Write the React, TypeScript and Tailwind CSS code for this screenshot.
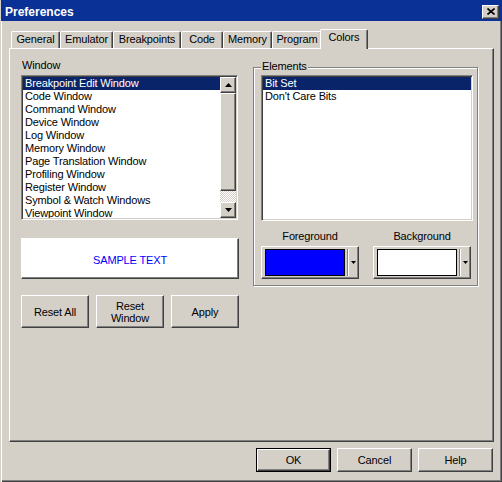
import React from 'react';

// classic 3D borders
const raised =
    'border border-t-white border-l-white border-r-[#404040] border-b-[#404040] shadow-[inset_-1px_-1px_#808080]';
const sunken =
    'border border-t-[#808080] border-l-[#808080] border-r-white border-b-white shadow-[inset_1px_1px_#404040,inset_-1px_-1px_#d4d0c8]';

const windows = [
    'Breakpoint Edit Window',
    'Code Window',
    'Command Window',
    'Device Window',
    'Log Window',
    'Memory Window',
    'Page Translation Window',
    'Profiling Window',
    'Register Window',
    'Symbol & Watch Windows',
    'Viewpoint Window',
];

const tabs = [
    { label: 'General', w: 'w-[49px]' },
    { label: 'Emulator', w: 'w-[53px]' },
    { label: 'Breakpoints', w: 'w-[68px]' },
    { label: 'Code', w: 'w-[42px]' },
    { label: 'Memory', w: 'w-[49px]' },
    { label: 'Program', w: 'w-[50px]' },
];

function Arrow(props: { up?: boolean }): JSX.Element {
    return (
        <svg width="7" height="4" viewBox="0 0 7 4">
            {props.up ? (
                <polygon points="3.5,0 7,4 0,4" fill="#000" />
            ) : (
                <polygon points="0,0 7,0 3.5,4" fill="#000" />
            )}
        </svg>
    );
}

function Button(props: { children: React.ReactNode; className?: string }): JSX.Element {
    return (
        <div
            className={`${raised} bg-[#d4d0c8] flex items-center justify-center text-center leading-[12px] ${props.className ?? ''}`}
        >
            {props.children}
        </div>
    );
}

function ColorPicker(props: { color: string }): JSX.Element {
    return (
        <div className={`${raised} w-[98px] h-[33px] flex items-stretch`}>
            <div
                className={`ml-[3px] mt-[2px] mb-[2px] w-[80px] border border-black ${props.color}`}
            />
            <div className="ml-[2px] my-[2px] w-[2px] border-l border-l-[#808080] border-r border-r-white" />
            <div className="flex-1 flex items-center justify-center pr-[1px]">
                <svg width="5" height="3" viewBox="0 0 5 3">
                    <polygon points="0,0 5,0 2.5,3" fill="#000" />
                </svg>
            </div>
        </div>
    );
}

function WindowList(): JSX.Element {
    return (
        <div className={`${sunken} bg-white w-[217px] h-[145px] flex p-px`}>
            <div className="flex-1 overflow-hidden">
                {windows.map((w, i) => (
                    <div
                        key={w}
                        className={
                            'h-[13px] leading-[13px] pl-[2px] whitespace-nowrap ' +
                            (i === 0 ? 'bg-[#0a246a] text-white' : 'text-black')
                        }
                    >
                        {w}
                    </div>
                ))}
            </div>
            <div className="w-[16px] flex flex-col">
                <div className={`${raised} bg-[#d4d0c8] h-[16px] flex items-center justify-center`}>
                    <Arrow up />
                </div>
                <div className={`${raised} bg-[#d4d0c8] h-[98px]`} />
                <div className="h-[11px] bg-[repeating-conic-gradient(#ffffff_0_25%,#d4d0c8_0_50%)] bg-[length:2px_2px]" />
                <div className={`${raised} bg-[#d4d0c8] h-[16px] flex items-center justify-center`}>
                    <Arrow />
                </div>
            </div>
        </div>
    );
}

export default function App(): JSX.Element {
    return (
        <div
            className="w-[502px] h-[482px] bg-[#d4d0c8] flex flex-col text-[11px] tracking-[-0.15px] text-black shadow-[inset_1px_0_#d4d0c8,inset_2px_0_#ffffff,inset_-1px_-1px_#404040,inset_-2px_-2px_#808080] select-none"
            style={{ fontFamily: '"Liberation Sans", Arial, sans-serif' }}
        >
            {/* title bar */}
            <div className="ml-px h-[21px] pt-[2px] bg-[#0a3196] flex items-center justify-between pl-[4px] pr-[3px]">
                <div className="text-white font-bold text-[12px] leading-[14px] tracking-normal">Preferences</div>
                <div className={`${raised} bg-[#d4d0c8] w-[17px] h-[14px] flex items-center justify-center`}>
                    <svg width="8" height="7" viewBox="0 0 8 7">
                        <path d="M0.5 0.5 L7.5 6.5 M7.5 0.5 L0.5 6.5" stroke="#000" strokeWidth="1.6" />
                    </svg>
                </div>
            </div>

            {/* tabs */}
            <div className="mt-[8px] ml-[11px] h-[20px] -mb-px relative z-10 flex items-end">
                {tabs.map((t) => (
                    <div
                        key={t.label}
                        className={`${t.w} h-[17px] mb-px pt-[1px] text-center leading-[13px] border-t border-l border-r border-t-white border-l-white border-r-[#404040] shadow-[inset_-1px_0_#808080] rounded-t-[2px]`}
                    >
                        {t.label}
                    </div>
                ))}
                <div className="-ml-[2px] w-[48px] h-[20px] pt-[1px] text-center leading-[13px] bg-[#d4d0c8] border-t border-l border-r border-t-white border-l-white border-r-[#404040] shadow-[inset_-1px_0_#808080] rounded-t-[2px]">
                    Colors
                </div>
            </div>

            {/* tab panel */}
            <div className={`${raised} ml-[9px] w-[485px] h-[394px] flex pl-[11px]`}>
                <div className="w-[218px] flex flex-col">
                    <div className="mt-[10px] h-[13px] leading-[13px] pl-[1px]">Window</div>
                    <div className="mt-[3px]">
                        <WindowList />
                    </div>
                    <div className={`${raised} mt-[18px] bg-white h-[41px] pt-[3px] flex items-center justify-center text-[#0000ff]`}>
                        SAMPLE TEXT
                    </div>
                    <div className="mt-[16px] flex gap-[7px]">
                        <Button className="w-[68px] h-[33px]">Reset All</Button>
                        <Button className="w-[68px] h-[33px]">
                            Reset
                            <br />
                            Window
                        </Button>
                        <Button className="w-[68px] h-[33px]">Apply</Button>
                    </div>
                </div>

                {/* elements group box */}
                <div className="ml-[14px] mt-[18px] w-[225px] h-[219px] relative border border-[#808080] shadow-[inset_1px_1px_#ffffff,1px_1px_#ffffff] px-[7px] pt-[7px]">
                    <div className="absolute left-[7px] -top-[8px] px-[1px] bg-[#d4d0c8] leading-[13px]">
                        Elements
                    </div>
                    <div className={`${sunken} bg-white w-[212px] h-[146px] p-px`}>
                        <div className="h-[13px] leading-[13px] pl-[2px] bg-[#0a246a] text-white">Bit Set</div>
                        <div className="h-[13px] leading-[13px] pl-[2px]">Don't Care Bits</div>
                    </div>
                    <div className="mt-[9px] flex gap-[14px]">
                        <div className="w-[98px] flex flex-col">
                            <div className="h-[13px] leading-[13px] text-center">Foreground</div>
                            <div className="mt-[3px]">
                                <ColorPicker color="bg-[#0000ff]" />
                            </div>
                        </div>
                        <div className="w-[98px] flex flex-col">
                            <div className="h-[13px] leading-[13px] text-center">Background</div>
                            <div className="mt-[3px]">
                                <ColorPicker color="bg-white" />
                            </div>
                        </div>
                    </div>
                </div>
            </div>

            {/* dialog buttons */}
            <div className="mt-[6px] ml-[256px] flex gap-[6px]">
                <div className="border border-black">
                    <Button className="w-[73px] h-[22px]">OK</Button>
                </div>
                <Button className="w-[75px] h-[24px]">Cancel</Button>
                <Button className="w-[75px] h-[24px]">Help</Button>
            </div>
        </div>
    );
}
